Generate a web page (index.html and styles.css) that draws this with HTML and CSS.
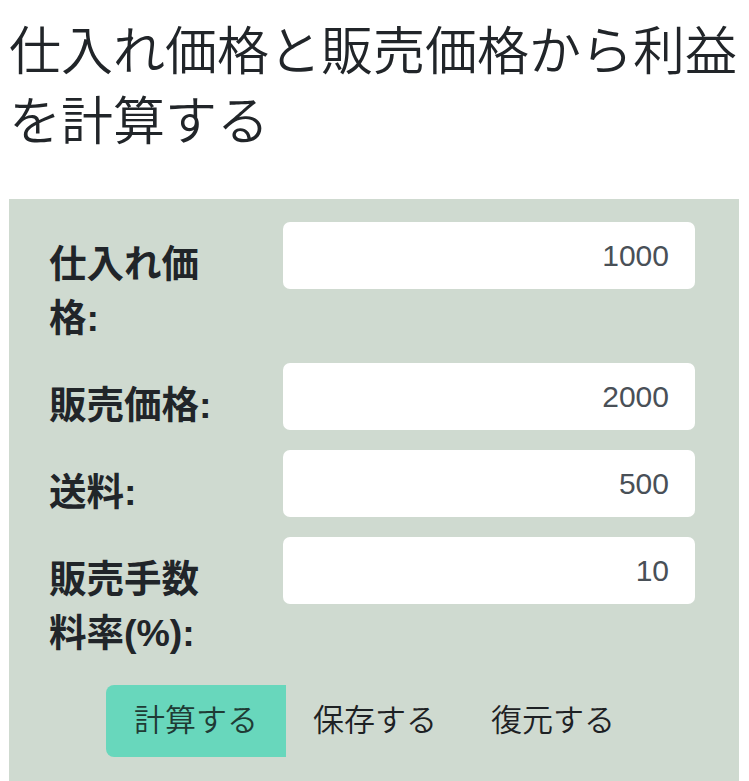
FILE: index.html
```html
<!DOCTYPE html>
<html lang="ja">
<head>
<meta charset="utf-8">
<title>利益計算</title>
<link rel="stylesheet" href="styles.css">
</head>
<body>
<div class="page">
  <h1 class="title">仕入れ価格と販売価格から利益を計算する</h1>
  <section class="panel">
    <form class="calc-form">
      <div class="row">
        <label class="label" for="cost">仕入れ価格:</label>
        <input class="field" id="cost" type="text" value="1000">
      </div>
      <div class="row">
        <label class="label" for="price">販売価格:</label>
        <input class="field" id="price" type="text" value="2000">
      </div>
      <div class="row">
        <label class="label" for="ship">送料:</label>
        <input class="field" id="ship" type="text" value="500">
      </div>
      <div class="row">
        <label class="label" for="fee">販売手数料率(%):</label>
        <input class="field" id="fee" type="text" value="10">
      </div>
      <div class="actions">
        <button type="button" class="btn btn-primary">計算する</button>
        <button type="button" class="btn">保存する</button>
        <button type="button" class="btn">復元する</button>
      </div>
    </form>
  </section>
</div>
</body>
</html>
```

FILE: styles.css
```css
html, body {
  margin: 0;
  padding: 0;
  background: #ffffff;
}

body {
  font-family: "Noto Sans CJK JP", sans-serif;
  color: #212529;
}

.page {
  padding: 0 10px 0 9px;
}

.title {
  margin: 13px 0 46px;
  font-size: 52px;
  line-height: 70px;
  font-weight: 350;
  color: #212529;
}

.panel {
  background: #cfdad0;
  padding: 23px 44px 24px 40px;
}

.calc-form {
  display: flex;
  flex-direction: column;
  gap: 18px;
}

.row {
  display: grid;
  grid-template-columns: 234px 1fr;
  align-items: start;
}

.label {
  font-family: "Liberation Sans", "Noto Sans CJK JP", sans-serif;
  font-weight: 700;
  font-size: 37.5px;
  line-height: 54px;
  padding-top: 15px;
  max-width: 174px;
  color: #212529;
}

.field {
  box-sizing: border-box;
  width: 100%;
  height: 67px;
  border: none;
  border-radius: 7px;
  background: #ffffff;
  font-family: "Liberation Sans", "Noto Sans CJK JP", sans-serif;
  font-size: 30px;
  color: #495057;
  text-align: right;
  padding: 0 26px 0 12px;
  outline: none;
}

.actions {
  display: flex;
  justify-content: center;
  margin-top: 7px;
  padding-left: 4px;
}

.btn {
  box-sizing: border-box;
  width: 178px;
  height: 72px;
  border: none;
  background: transparent;
  font-family: "Noto Sans CJK JP", sans-serif;
  font-weight: 350;
  font-size: 31px;
  line-height: 40px;
  color: #1d2124;
  padding: 0 0 6px;
  cursor: pointer;
}

.btn-primary {
  width: 180px;
  background: #68d7bc;
  color: #1f3b35;
  border-radius: 8px 0 0 8px;
}
```
